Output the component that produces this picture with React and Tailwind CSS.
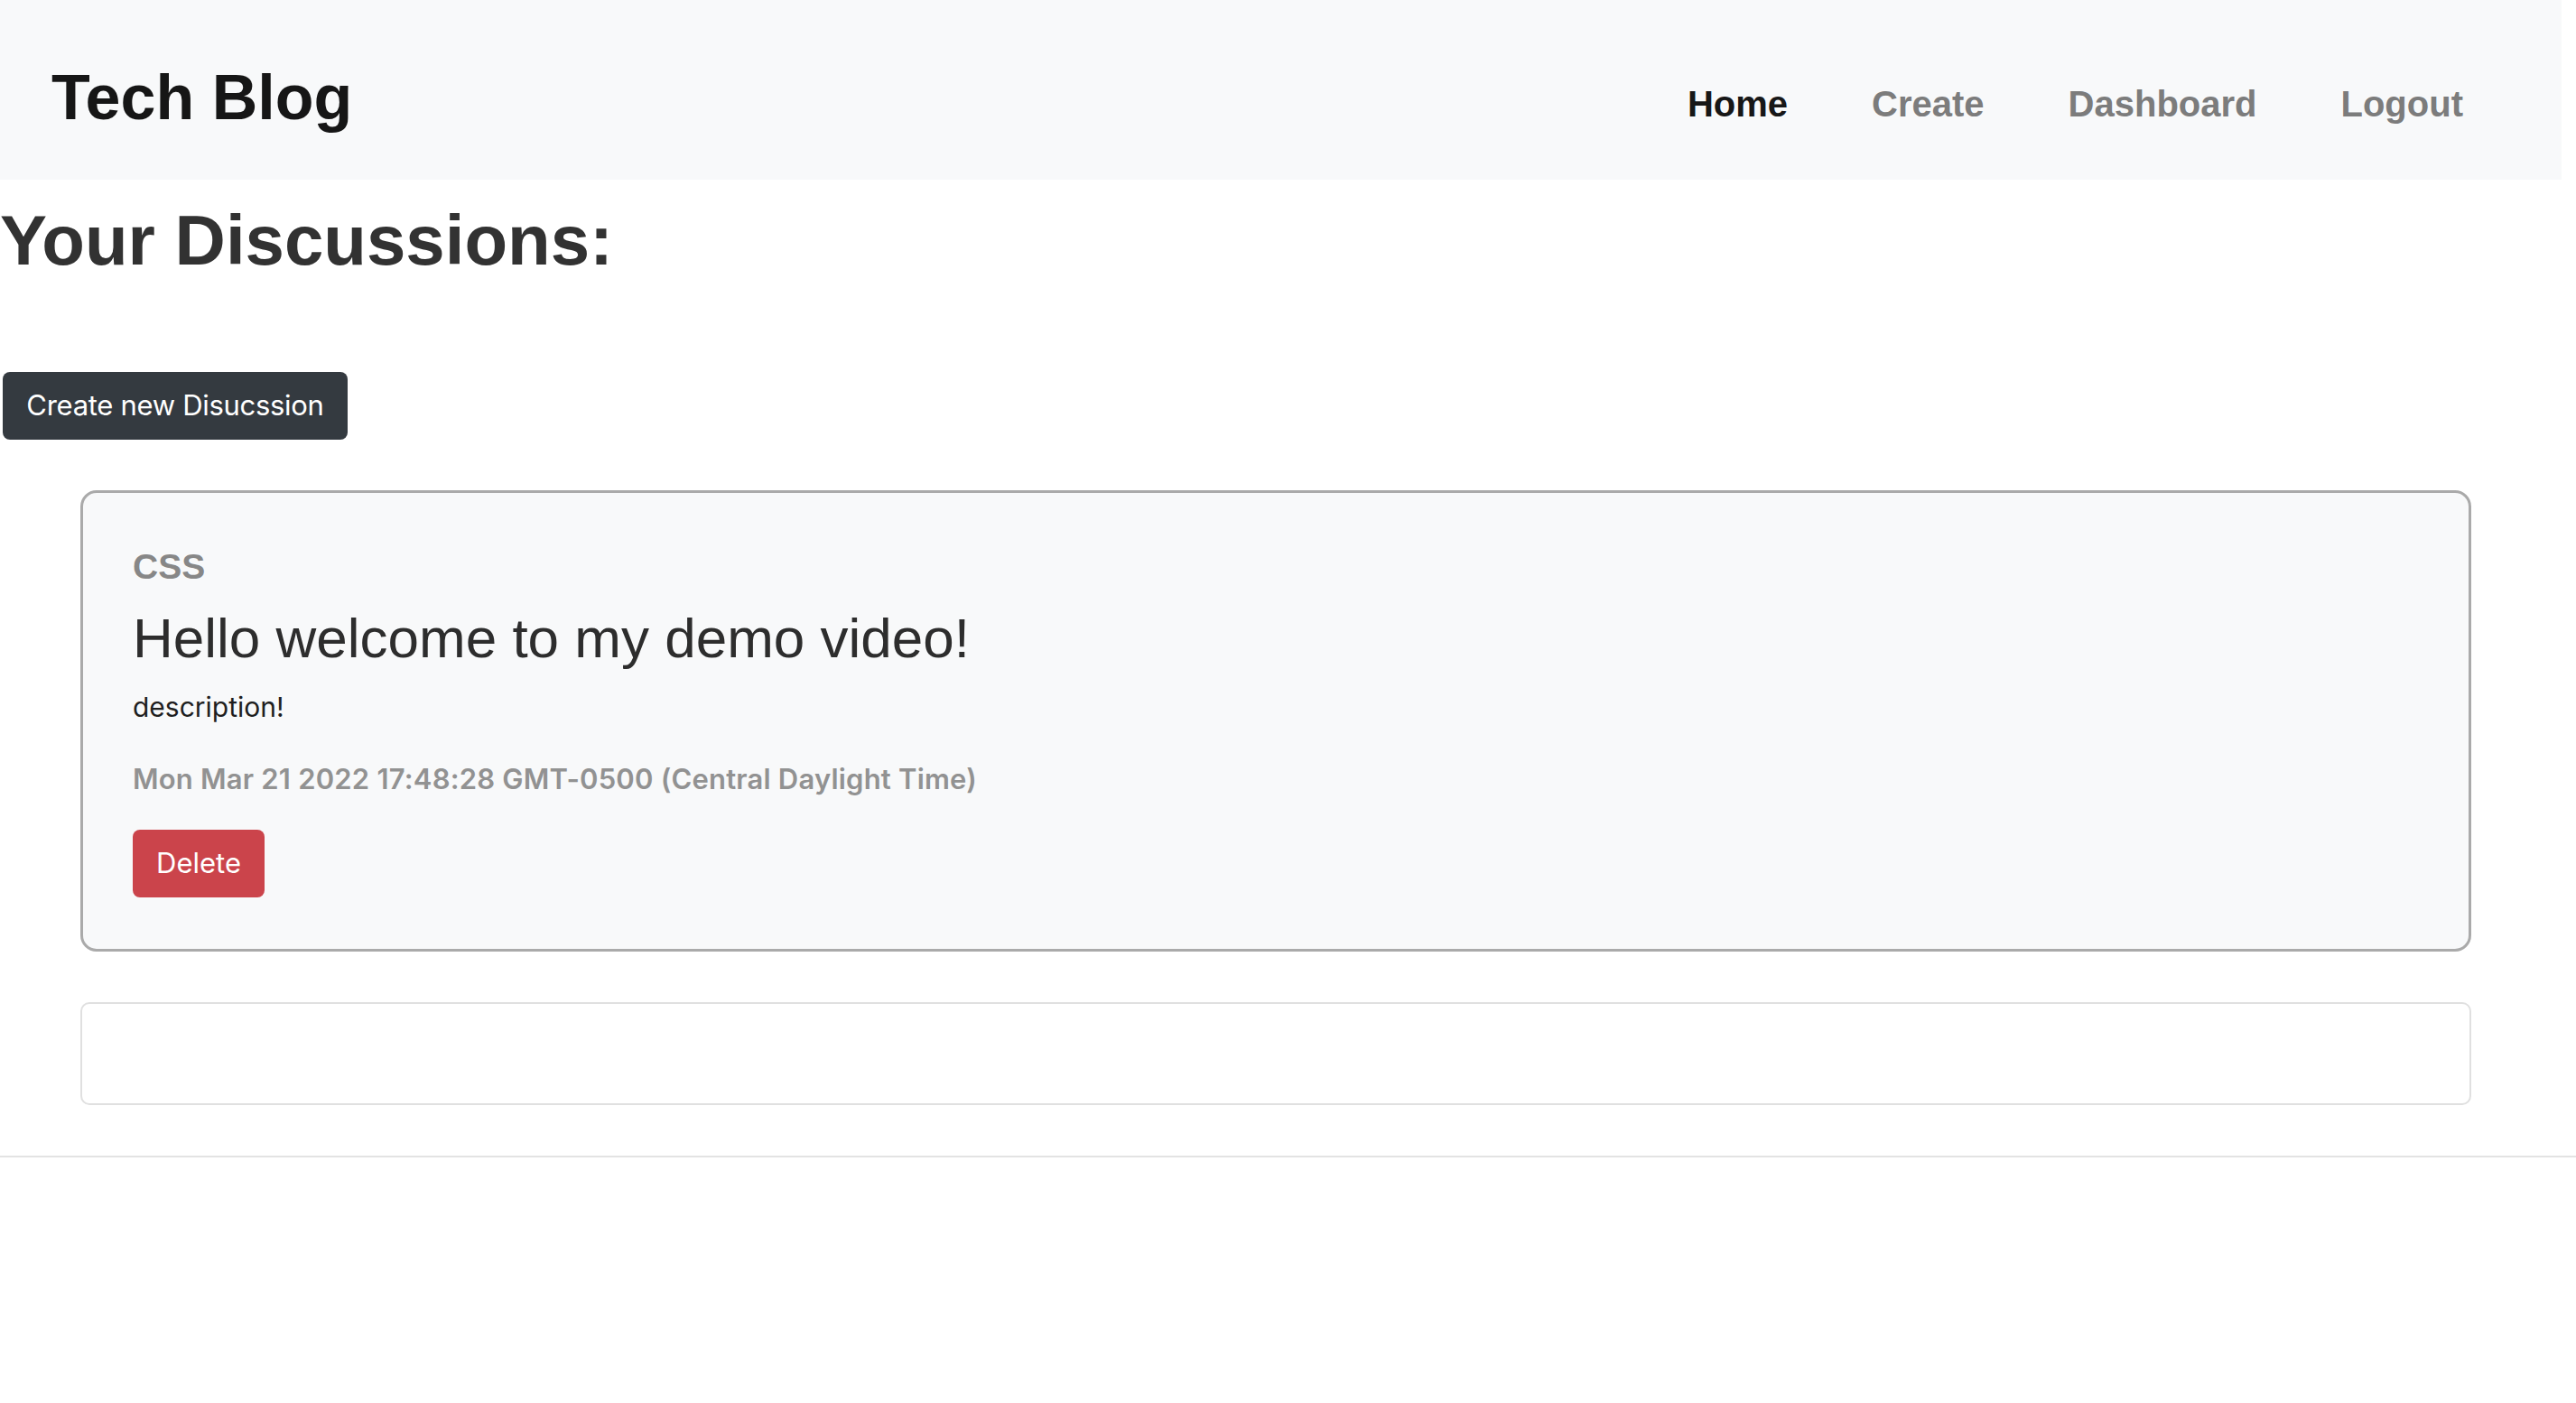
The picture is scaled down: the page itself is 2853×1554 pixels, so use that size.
import React from 'react';

const helv = { fontFamily: '"Liberation Sans", Arial, sans-serif' };

const NavLink = ({ children, active }) => (
  <a
    href="#"
    className={
      active
        ? 'text-[40px] leading-none font-bold text-[#171717]'
        : 'text-[40px] leading-none font-bold text-[#7c7c7c]'
    }
  >
    {children}
  </a>
);

const DiscussionCard = ({ tag, title, description, date }) => (
  <div className="ml-[89px] w-[2648px] border-[3px] border-[#aaaaaa] rounded-[18px] bg-[#f8f9fa] pl-[55px] pt-[62px] pb-[57px] font-['Inter',sans-serif]">
    <div className="text-[39px] leading-none font-bold text-[#878787] font-['Liberation_Sans',Arial,sans-serif]">{tag}</div>
    <h2 className="mt-[29px] text-[62px] leading-none text-[#2d2d2d] font-['Liberation_Sans',Arial,sans-serif]">{title}</h2>
    <p className="mt-[30px] text-[30px] leading-none text-[#1f1f1f]">{description}</p>
    <p className="mt-[49px] text-[31px] leading-none font-semibold tracking-[0.2px] text-[#929292]">{date}</p>
    <button className="mt-[41px] w-[146px] h-[75px] rounded-[8px] bg-[#cb444b] text-white text-[31px]">
      Delete
    </button>
  </div>
);

export default function App() {
  return (
    <div className="min-h-screen bg-white" style={helv}>
      <header className="w-[2837px] h-[199px] bg-[#f8f9fa] flex items-start">
        <a href="#" className="mt-[73px] ml-[57px] text-[70px] leading-none font-bold text-[#161616]">
          Tech Blog
        </a>
        <nav className="ml-auto mr-[109px] mt-[95px] flex gap-[93px]">
          <NavLink active>Home</NavLink>
          <NavLink>Create</NavLink>
          <NavLink>Dashboard</NavLink>
          <NavLink>Logout</NavLink>
        </nav>
      </header>

      <main>
        <h1 className="mt-[28px] text-[78px] leading-none font-bold text-[#323232]">Your Discussions:</h1>

        <button className="mt-[107px] ml-[3px] w-[382px] h-[75px] rounded-[8px] bg-[#343a40] text-white text-[31px] font-['Inter',sans-serif] tracking-[-0.3px]">
          Create new Disucssion
        </button>

        <div className="mt-[56px] flex flex-col gap-[56px]">
          <DiscussionCard
            tag="CSS"
            title="Hello welcome to my demo video!"
            description="description!"
            date="Mon Mar 21 2022 17:48:28 GMT-0500 (Central Daylight Time)"
          />
          <div className="ml-[89px] w-[2648px] h-[114px] border-2 border-[#e0e0e0] rounded-[10px] bg-white"></div>
        </div>

        <div className="mt-[56px] h-[2px] w-full bg-[#e3e3e3]"></div>
      </main>
    </div>
  );
}
